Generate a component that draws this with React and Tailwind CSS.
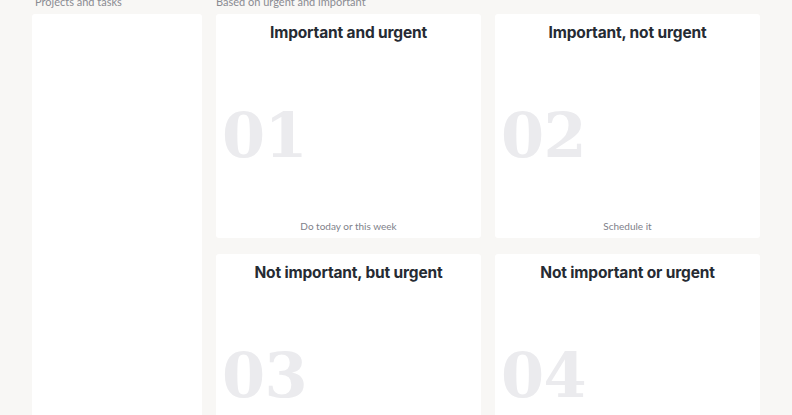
const quadrants = [
  { n: "01", title: "Important and urgent", hint: "Do today or this week" },
  { n: "02", title: "Important, not urgent", hint: "Schedule it" },
  { n: "03", title: "Not important, but urgent", hint: "Delegate it" },
  { n: "04", title: "Not important or urgent", hint: "Drop it" },
];

function Quadrant({ q }) {
  return (
    <div className="bg-white rounded-[3px] h-[224px] flex flex-col px-[6px] pt-[10px] pb-[4px]">
      <h3 className="text-center text-[15.5px] font-bold text-[#262b33] tracking-[-0.01em] leading-[16px] pt-[1px] font-['Inter','Noto_Sans',sans-serif]">
        {q.title}
      </h3>
      <div className="mt-[65px] text-[62px] leading-[60px] font-bold text-[#ebebee] font-['DejaVu_Serif',serif] tracking-[-0.01em]">
        {q.n}
      </div>
      <p className="mt-auto text-center text-[10px] text-[#80818a] font-['Lato',sans-serif]">
        {q.hint}
      </p>
    </div>
  );
}

export default function App() {
  return (
    <div className="w-[792px] h-[415px] overflow-hidden bg-[#f8f7f5] flex items-start gap-[14px] pl-[32px]">
      <section className="w-[170px] shrink-0 flex flex-col">
        <p className="shrink-0 -mt-[4px] h-[18px] leading-[12px] pl-[3px] text-[11px] text-[#8a8b92] font-['Lato',sans-serif]">
          Projects and tasks
        </p>
        <div className="bg-white rounded-[3px] h-[500px]" />
      </section>
      <section className="w-[544px] shrink-0 flex flex-col">
        <p className="shrink-0 -mt-[4px] h-[18px] leading-[12px] text-[11px] text-[#8a8b92] font-['Lato',sans-serif]">
          Based on urgent and important
        </p>
        <div className="grid grid-cols-2 gap-x-[14px] gap-y-[16px]">
          {quadrants.map((q) => (
            <Quadrant key={q.n} q={q} />
          ))}
        </div>
      </section>
    </div>
  );
}
